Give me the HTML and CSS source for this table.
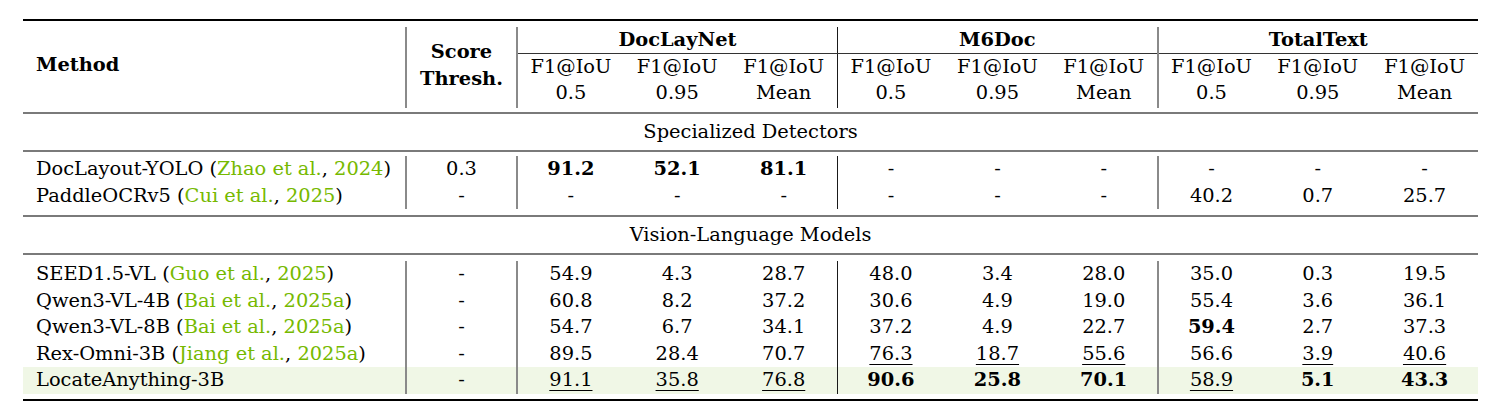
FILE: index.html
```html
<!DOCTYPE html>
<html lang="en">
<head>
<meta charset="utf-8">
<title>Layout detection results</title>
<link rel="stylesheet" href="styles.css">
</head>
<body>
<table class="results">
  <colgroup>
    <col class="c-method">
    <col class="c-score">
    <col class="c-num"><col class="c-num"><col class="c-num">
    <col class="c-num"><col class="c-num"><col class="c-num">
    <col class="c-num"><col class="c-num"><col class="c-num">
  </colgroup>
  <thead>
    <tr class="gap g6 rule-top"><td colspan="11"></td></tr>
    <tr class="hrow1">
      <th rowspan="2" class="h-method vl">Method</th>
      <th rowspan="2" class="h-score vl">Score<br>Thresh.</th>
      <th colspan="3" class="grp vl-thin">DocLayNet</th>
      <th colspan="3" class="grp vl">M6Doc</th>
      <th colspan="3" class="grp">TotalText</th>
    </tr>
    <tr class="hrow2">
      <td>F1@IoU<br>0.5</td><td>F1@IoU<br>0.95</td><td class="vl-thin">F1@IoU<br>Mean</td>
      <td>F1@IoU<br>0.5</td><td>F1@IoU<br>0.95</td><td class="vl">F1@IoU<br>Mean</td>
      <td>F1@IoU<br>0.5</td><td>F1@IoU<br>0.95</td><td>F1@IoU<br>Mean</td>
    </tr>
    <tr class="gap g4 rule-mid"><td colspan="11"></td></tr>
  </thead>
  <tbody>
    <tr class="section rule-mid"><td colspan="11">Specialized Detectors</td></tr>
    <tr class="gap g4"><td colspan="11"></td></tr>
    <tr class="data">
      <td class="m vl">DocLayout-YOLO (<span class="cite">Zhao et al.</span>, <span class="cite">2024</span>)</td>
      <td class="vl">0.3</td>
      <td class="b">91.2</td><td class="b">52.1</td><td class="b vl-thin">81.1</td>
      <td>-</td><td>-</td><td class="vl">-</td>
      <td>-</td><td>-</td><td>-</td>
    </tr>
    <tr class="data">
      <td class="m vl">PaddleOCRv5 (<span class="cite">Cui et al.</span>, <span class="cite">2025</span>)</td>
      <td class="vl">-</td>
      <td>-</td><td>-</td><td class="vl-thin">-</td>
      <td>-</td><td>-</td><td class="vl">-</td>
      <td>40.2</td><td>0.7</td><td>25.7</td>
    </tr>
    <tr class="gap g6 rule-mid"><td colspan="11"></td></tr>
    <tr class="section rule-mid"><td colspan="11">Vision-Language Models</td></tr>
    <tr class="gap g6"><td colspan="11"></td></tr>
    <tr class="data">
      <td class="m vl">SEED1.5-VL (<span class="cite">Guo et al.</span>, <span class="cite">2025</span>)</td>
      <td class="vl">-</td>
      <td>54.9</td><td>4.3</td><td class="vl-thin">28.7</td>
      <td>48.0</td><td>3.4</td><td class="vl">28.0</td>
      <td>35.0</td><td>0.3</td><td>19.5</td>
    </tr>
    <tr class="data">
      <td class="m vl">Qwen3-VL-4B (<span class="cite">Bai et al.</span>, <span class="cite">2025a</span>)</td>
      <td class="vl">-</td>
      <td>60.8</td><td>8.2</td><td class="vl-thin">37.2</td>
      <td>30.6</td><td>4.9</td><td class="vl">19.0</td>
      <td>55.4</td><td>3.6</td><td>36.1</td>
    </tr>
    <tr class="data">
      <td class="m vl">Qwen3-VL-8B (<span class="cite">Bai et al.</span>, <span class="cite">2025a</span>)</td>
      <td class="vl">-</td>
      <td>54.7</td><td>6.7</td><td class="vl-thin">34.1</td>
      <td>37.2</td><td>4.9</td><td class="vl">22.7</td>
      <td class="b">59.4</td><td>2.7</td><td>37.3</td>
    </tr>
    <tr class="data">
      <td class="m vl">Rex-Omni-3B (<span class="cite">Jiang et al.</span>, <span class="cite">2025a</span>)</td>
      <td class="vl">-</td>
      <td>89.5</td><td>28.4</td><td class="vl-thin">70.7</td>
      <td><span class="u">76.3</span></td><td><span class="u">18.7</span></td><td class="vl"><span class="u">55.6</span></td>
      <td>56.6</td><td><span class="u">3.9</span></td><td><span class="u">40.6</span></td>
    </tr>
    <tr class="data hl">
      <td class="m vl">LocateAnything-3B</td>
      <td class="vl">-</td>
      <td><span class="u">91.1</span></td><td><span class="u">35.8</span></td><td class="vl-thin"><span class="u">76.8</span></td>
      <td class="b">90.6</td><td class="b">25.8</td><td class="b vl">70.1</td>
      <td><span class="u">58.9</span></td><td class="b">5.1</td><td class="b">43.3</td>
    </tr>
    <tr class="gap g5 rule-bottom"><td colspan="11"></td></tr>
  </tbody>
</table>
</body>
</html>
```

FILE: styles.css
```css
html, body {
  margin: 0;
  background: #ffffff;
}

body {
  font-family: "DejaVu Serif", "Liberation Serif", serif;
  font-size: 19.4px;
  color: #000000;
}

.results {
  border-collapse: collapse;
  table-layout: fixed;
  width: 1455px;
  margin: 19px 0 0 23px;
}

.c-method { width: 383px; }
.c-score { width: 111px; }
.c-num { width: 106.78px; }

.results th,
.results td {
  padding: 0;
  text-align: center;
  vertical-align: middle;
  line-height: 26.5px;
  font-weight: normal;
  white-space: nowrap;
}

/* rules */
.rule-top { border-top: 2px solid #000000; }
.rule-bottom { border-bottom: 2px solid #000000; }
.rule-mid { border-bottom: 2px solid #7a7a7a; }

.vl { border-right: 2px solid #8a8a8a; }
.vl-thin { border-right: 1px solid #1a1a1a; }

/* spacer rows */
.gap td { font-size: 0; line-height: 0; }
.g4 td { height: 4px; }
.g5 td { height: 5px; }
.g6 td { height: 6px; }
.g7 td { height: 7px; }

/* header */
.hrow1 th { height: 26px; }
.hrow1 .grp {
  font-weight: bold;
  border-bottom: 1px solid #333333;
  line-height: 24px;
}
.h-method {
  font-weight: bold !important;
  text-align: left !important;
  padding-left: 13px !important;
  padding-bottom: 4px !important;
}
.h-score {
  font-weight: bold !important;
  padding-bottom: 4px !important;
}
.hrow2 td {
  height: 51px;
  line-height: 26px;
  padding-bottom: 2px;
}

/* section titles */
.section td { height: 36px; }

/* data */
.data td {
  height: 26.5px;
  line-height: 26px;
}
.data td.m {
  text-align: left;
  padding-left: 13px;
}
.hl td { background: #f0f7e6; }

.cite { color: #76b900; }
.b { font-weight: bold !important; }
.u {
  text-decoration: underline;
  text-decoration-thickness: 1px;
  text-underline-offset: 4px;
}
```
